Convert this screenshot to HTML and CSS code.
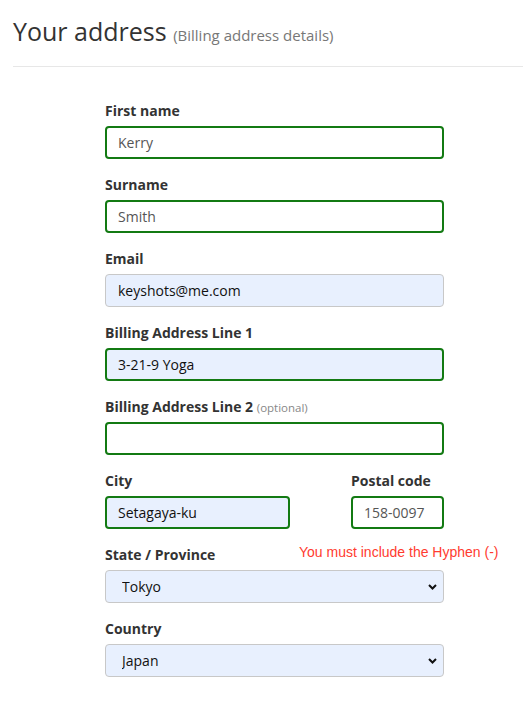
FILE: index.html
```html
<!DOCTYPE html>
<html lang="en">
<head>
<meta charset="utf-8">
<title>Your address</title>
<link rel="stylesheet" href="styles.css">
</head>
<body>
<div class="page">
  <h2 class="title">Your address <small class="subtitle">(Billing address details)</small></h2>
  <form class="form">
    <div class="group">
      <label class="label">First name</label>
      <input class="field valid" type="text" value="Kerry">
    </div>
    <div class="group">
      <label class="label">Surname</label>
      <input class="field valid" type="text" value="Smith">
    </div>
    <div class="group">
      <label class="label">Email</label>
      <input class="field filled" type="text" value="keyshots@me.com">
    </div>
    <div class="group">
      <label class="label">Billing Address Line 1</label>
      <input class="field valid filled" type="text" value="3-21-9 Yoga">
    </div>
    <div class="group">
      <label class="label">Billing Address Line 2 <span class="optional">(optional)</span></label>
      <input class="field valid" type="text" value="">
    </div>
    <div class="row">
      <div class="group city">
        <label class="label">City</label>
        <input class="field valid filled" type="text" value="Setagaya-ku">
      </div>
      <div class="group postal">
        <label class="label">Postal code</label>
        <input class="field valid" type="text" value="158-0097">
        <div class="error">You must include the Hyphen (-)</div>
      </div>
    </div>
    <div class="group">
      <label class="label">State / Province</label>
      <div class="select-wrap">
        <select class="field select filled"><option>Tokyo</option></select>
        <svg class="chevron" width="9" height="6" viewBox="0 0 9 6"><path d="M1 1l3.5 3.5L8 1" fill="none" stroke="#111" stroke-width="2"/></svg>
      </div>
    </div>
    <div class="group">
      <label class="label">Country</label>
      <div class="select-wrap">
        <select class="field select filled"><option>Japan</option></select>
        <svg class="chevron" width="9" height="6" viewBox="0 0 9 6"><path d="M1 1l3.5 3.5L8 1" fill="none" stroke="#111" stroke-width="2"/></svg>
      </div>
    </div>
  </form>
</div>
</body>
</html>
```
FILE: styles.css
```css
* { box-sizing: border-box; }
html, body { margin: 0; padding: 0; background: #fff; }
body { font-family: "Open Sans", "Liberation Sans", sans-serif; color: #333; }
.page { padding: 0 0 0 13px; }
.title {
  margin: 0;
  padding-top: 14px;
  font-size: 25px;
  font-weight: 400;
  line-height: 34px;
  color: #333;
  padding-bottom: 14px;
  border-bottom: 1px solid #e7e7e7;
}
.subtitle { font-size: 15px; color: #777; }
.form { width: 339px; margin: 34px 0 0 92px; }
.group { margin-bottom: 16px; position: relative; }
.label {
  display: block;
  height: 20px;
  font-size: 14px;
  font-weight: 700;
  line-height: 20px;
  margin-bottom: 5px;
  color: #333;
}
.optional { font-weight: 400; font-size: 11.5px; line-height: 1; color: #888; }
.field {
  display: block;
  width: 100%;
  height: 33px;
  padding: 0 12px;
  font-family: "Open Sans", "Liberation Sans", sans-serif;
  font-size: 14px;
  color: #555;
  background: #fff;
  border: 1px solid #c8c8c8;
  border-radius: 4px;
  outline: none;
}
.valid { border: 2px solid #137a13; padding: 0 11px; }
.filled { background: #e8f0fe; color: #111; }
.row { display: flex; justify-content: space-between; }
.city { width: 185px; }
.postal { width: 93px; }
.error {
  position: absolute;
  left: -52px;
  top: 73px;
  white-space: nowrap;
  font-family: "Liberation Sans", Arial, sans-serif;
  font-size: 14px;
  line-height: 16px;
  color: #ff3b30;
}
.select-wrap { position: relative; }
.select {
  -webkit-appearance: none;
  appearance: none;
  padding-left: 16px;
}
.chevron { position: absolute; right: 7px; top: 14px; pointer-events: none; }
```
